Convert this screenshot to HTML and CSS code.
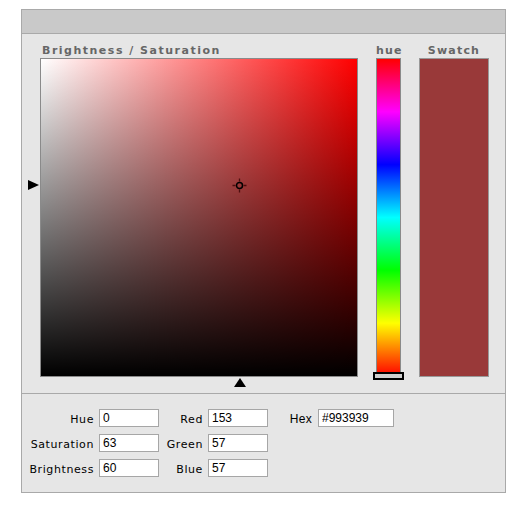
FILE: index.html
```html
<!DOCTYPE html>
<html>
<head>
<meta charset="utf-8">
<link rel="stylesheet" href="styles.css">
</head>
<body>
<div class="panel">
  <div class="header"></div>
  <div class="main">
    <div class="col">
      <div class="title title-left">Brightness / Saturation</div>
      <div class="picker">
        <div class="arrow-left"></div>
        <div class="arrow-down"></div>
        <svg class="cross" width="15" height="15" viewBox="0 0 15 15">
          <circle cx="7.5" cy="7.5" r="3" fill="none" stroke="#000" stroke-width="1.5"/>
          <path d="M7.5 0.5V3.5M7.5 11.5V14.5M0.5 7.5H3.5M11.5 7.5H14.5" stroke="#300" stroke-width="1.3" opacity="0.75"/>
        </svg>
      </div>
    </div>
    <div class="col hue-col">
      <div class="title">hue</div>
      <div class="hue">
        <div class="hue-marker"></div>
      </div>
    </div>
    <div class="col swatch-col">
      <div class="title">Swatch</div>
      <div class="swatch"></div>
    </div>
  </div>
  <div class="form">
    <label class="lbl">Hue</label><input class="field" type="text" value="0">
    <label class="lbl">Red</label><input class="field" type="text" value="153">
    <label class="lbl lbl-hex">Hex</label><input class="field field-hex" type="text" value="#993939">
    <label class="lbl">Saturation</label><input class="field" type="text" value="63">
    <label class="lbl">Green</label><input class="field" type="text" value="57">
    <span></span><span></span>
    <label class="lbl">Brightness</label><input class="field" type="text" value="60">
    <label class="lbl">Blue</label><input class="field" type="text" value="57">
    <span></span><span></span>
  </div>
</div>
</body>
</html>
```
FILE: styles.css
```css
html, body {
  margin: 0;
  padding: 0;
  background: #fff;
}
body {
  font-family: "DejaVu Sans", sans-serif;
}
.panel {
  margin: 9px 0 0 21px;
  width: 485px;
  box-sizing: border-box;
  border: 1px solid #a9a9a9;
  background: #e6e6e6;
}
.header {
  height: 23px;
  background: #c9c9c9;
  border-bottom: 1px solid #a9a9a9;
}
.main {
  display: flex;
  padding: 10px 15px 16px 18px;
}
.col {
  display: flex;
  flex-direction: column;
}
.title {
  height: 13px;
  line-height: 13px;
  margin-bottom: 1px;
  font-size: 11px;
  font-weight: bold;
  color: #666;
  letter-spacing: 1.2px;
  text-align: center;
  white-space: nowrap;
}
.title-left {
  text-align: left;
  padding-left: 2px;
  letter-spacing: 1.5px;
}
.picker {
  position: relative;
  width: 318px;
  height: 319px;
  box-sizing: border-box;
  border: 1px solid #8a8a8a;
  background: linear-gradient(to top, #000, rgba(0,0,0,0)), linear-gradient(to right, #fff, #f00);
}
.arrow-left {
  position: absolute;
  left: -13px;
  top: 121px;
  width: 0;
  height: 0;
  border-top: 5.5px solid transparent;
  border-bottom: 5.5px solid transparent;
  border-left: 11px solid #000;
}
.arrow-down {
  position: absolute;
  left: 193px;
  top: calc(100% + 2px);
  width: 0;
  height: 0;
  border-left: 6px solid transparent;
  border-right: 6px solid transparent;
  border-bottom: 9px solid #000;
}
.cross {
  position: absolute;
  left: 191px;
  top: 119px;
}
.hue-col {
  margin-left: 18px;
  width: 25px;
}
.hue {
  position: relative;
  height: 319px;
  box-sizing: border-box;
  border: 1px solid #8a8a8a;
  background: linear-gradient(to bottom, #f00 0%, #f0f 16.67%, #00f 33.33%, #0ff 50%, #0f0 66.67%, #ff0 83.33%, #f00 100%);
}
.hue-marker {
  position: absolute;
  left: -4px;
  bottom: -4px;
  width: 31px;
  height: 8px;
  box-sizing: border-box;
  border: 2px solid #000;
  background: #cfcfcf;
}
.swatch-col {
  margin-left: 18px;
  width: 70px;
}
.swatch {
  height: 319px;
  box-sizing: border-box;
  border: 1px solid #999;
  background: #993939;
}
.form {
  border-top: 1px solid #a9a9a9;
  padding: 15px 0 15px 0;
  display: grid;
  grid-template-columns: 77px 60px 49px 60px 50px 76px;
  grid-auto-rows: 18px;
  row-gap: 7px;
  align-items: center;
}
.lbl {
  text-align: right;
  padding: 3px 5px 0 0;
  font-size: 11px;
  letter-spacing: 0.6px;
  color: #000;
  white-space: nowrap;
  line-height: 15px;
}
.lbl-hex {
  font-family: "Liberation Sans", Arial, sans-serif;
  font-size: 12px;
  letter-spacing: 0.3px;
  padding-right: 6px;
}
.field {
  box-sizing: border-box;
  width: 60px;
  height: 18px;
  margin: 0;
  padding: 0 0 0 3px;
  border: 1px solid #a6a6a6;
  background: #fff;
  font-family: "Liberation Sans", Arial, sans-serif;
  font-size: 12px;
  color: #000;
  outline: none;
}
.field-hex {
  width: 76px;
}
```
